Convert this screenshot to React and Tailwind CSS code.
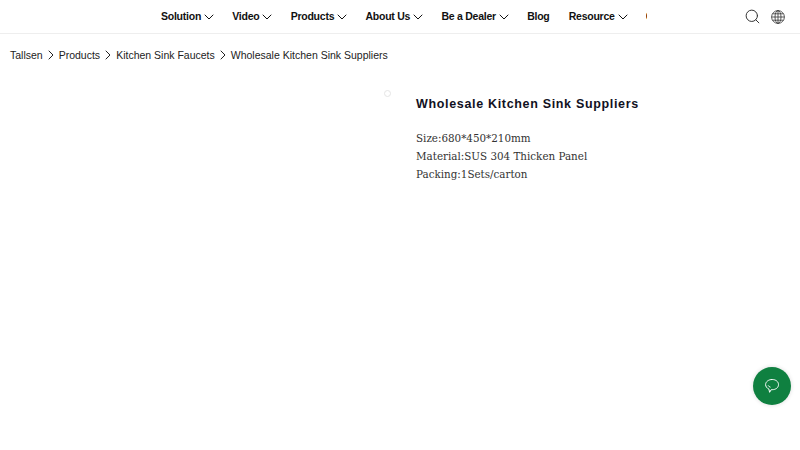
import React from "react";
import { ChevronDown, ChevronRight, Search } from "lucide-react";

const navItems = [
  { label: "Solution", arrow: true },
  { label: "Video", arrow: true },
  { label: "Products", arrow: true },
  { label: "About Us", arrow: true },
  { label: "Be a Dealer", arrow: true },
  { label: "Blog", arrow: false },
  { label: "Resource", arrow: true },
];

const crumbs = ["Tallsen", "Products", "Kitchen Sink Faucets", "Wholesale Kitchen Sink Suppliers"];

const GlobeIcon = () => (
  <svg width="14" height="14" viewBox="0 0 14 14" fill="none" stroke="currentColor" strokeWidth="0.8">
    <circle cx="7" cy="7" r="6.4" />
    <ellipse cx="7" cy="7" rx="3" ry="6.4" />
    <path d="M7 .6v12.8M.6 7h12.8M1.5 3.8h11M1.5 10.2h11" />
  </svg>
);

const ChatIcon = () => (
  <svg width="16" height="16" viewBox="0 0 16 16" fill="none" stroke="currentColor" strokeWidth="1">
    <path d="M8.2 1.5c3.6 0 6.3 2.2 6.3 5.1s-2.7 5.1-6.3 5.1H7.2L5.6 14.3l-.7-3.2C2.9 10.2 1.6 8.5 1.6 6.6c0-2.9 3-5.1 6.6-5.1Z" />
    <path d="M4.2 7.4c.5 1 1.3 1.6 2.3 1.8" />
  </svg>
);

const App = () => {
  return (
    <div className="relative h-[450px] w-[800px] overflow-hidden bg-white font-['Liberation_Sans',Arial,sans-serif] text-black">
      <header className="flex h-[34px] items-center border-b border-[#eeeeee] pl-[161px]">
        <nav className="flex items-center gap-[19.2px]">
          {navItems.map((item) => (
            <a key={item.label} className="flex items-center text-[10.5px] font-bold tracking-[-0.24px] text-[#111111]">
              {item.label}
              {item.arrow && <ChevronDown size={16} strokeWidth={1.5} className="-mr-[4px]" />}
            </a>
          ))}
          <span className="w-[1.5px] overflow-hidden text-[10.5px] font-bold text-[#111111]">C</span>
        </nav>
        <div className="ml-auto flex items-center gap-[10px] pr-[15px] text-[#333333]">
          <Search size={17} strokeWidth={1.4} />
          <GlobeIcon />
        </div>
      </header>

      <div className="flex items-center pl-[10px] pt-[13px] text-[10.5px] leading-[14px] text-[#222222]">
        {crumbs.map((crumb, i) => (
          <React.Fragment key={crumb}>
            {i > 0 && <ChevronRight size={16} strokeWidth={1.5} />}
            <span>{crumb}</span>
          </React.Fragment>
        ))}
      </div>

      <div className="flex pl-[384px] pt-[32px]">
        <span className="-mt-[5px] h-[7px] w-[7px] rounded-full border border-[#e5e5e5]" />
        <div className="ml-[25px]">
          <h1 className="text-[12.5px] font-bold leading-[18px] tracking-[0.67px] text-[#111122]">
            Wholesale Kitchen Sink Suppliers
          </h1>
          <div className="mt-[16px] font-['DejaVu_Serif',serif] text-[10.35px] leading-[18px] text-[#333333]">
            <p>Size:680*450*210mm</p>
            <p>Material:SUS 304 Thicken Panel</p>
            <p>Packing:1Sets/carton</p>
          </div>
        </div>
      </div>

      <button className="absolute left-[753px] top-[367px] flex h-[38px] w-[38px] items-center justify-center rounded-full bg-[#0f8040] text-white shadow-[0_0_4px_rgba(0,0,0,0.15)]">
        <ChatIcon />
      </button>
    </div>
  );
};

export default App;
